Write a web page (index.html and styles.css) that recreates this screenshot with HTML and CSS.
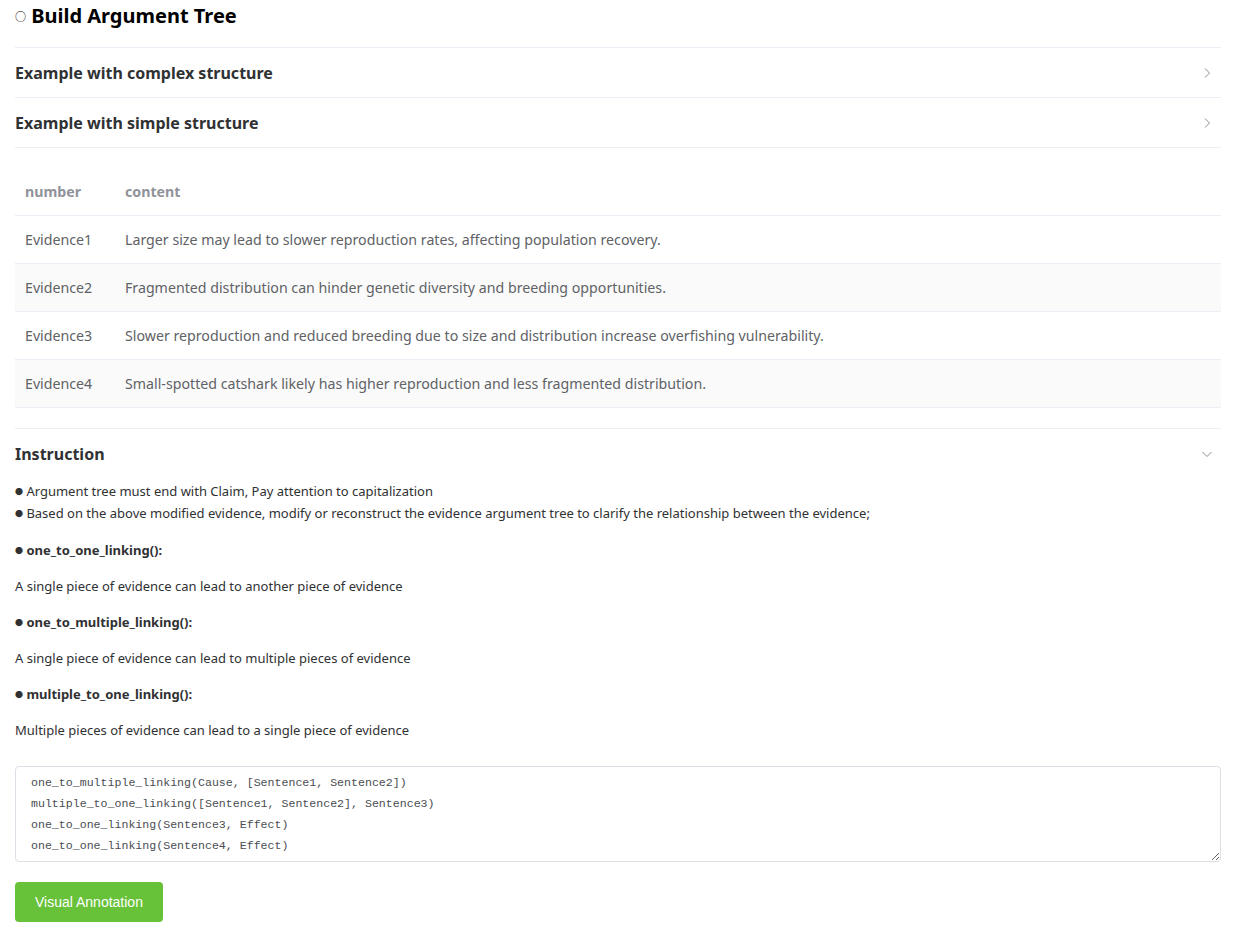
FILE: index.html
```html
<!DOCTYPE html>
<html lang="en">
<head>
    <meta charset="UTF-8">
    <meta name="viewport" content="width=device-width, initial-scale=1.0">
    <title>Build Argument Tree</title>
    <link rel="stylesheet" href="styles.css">
</head>
<body>
    <div class="page">
        <h3 class="title"><span class="ring">○</span> Build Argument Tree</h3>

        <div class="collapse">
            <div class="collapse_item">
                <div class="collapse_head">
                    <span>Example with complex structure</span>
                    <svg class="arrow" width="12" height="12" viewBox="0 0 12 12"><path d="M4 1.5 L8.5 6 L4 10.5" fill="none" stroke="#8a8f99" stroke-width="1"/></svg>
                </div>
            </div>
            <div class="collapse_item">
                <div class="collapse_head">
                    <span>Example with simple structure</span>
                    <svg class="arrow" width="12" height="12" viewBox="0 0 12 12"><path d="M4 1.5 L8.5 6 L4 10.5" fill="none" stroke="#8a8f99" stroke-width="1"/></svg>
                </div>
            </div>
        </div>

        <table class="ev_table">
            <thead>
                <tr>
                    <th>number</th>
                    <th>content</th>
                </tr>
            </thead>
            <tbody>
                <tr>
                    <td>Evidence1</td>
                    <td>Larger size may lead to slower reproduction rates, affecting population recovery.</td>
                </tr>
                <tr class="stripe">
                    <td>Evidence2</td>
                    <td>Fragmented distribution can hinder genetic diversity and breeding opportunities.</td>
                </tr>
                <tr>
                    <td>Evidence3</td>
                    <td>Slower reproduction and reduced breeding due to size and distribution increase overfishing vulnerability.</td>
                </tr>
                <tr class="stripe">
                    <td>Evidence4</td>
                    <td>Small-spotted catshark likely has higher reproduction and less fragmented distribution.</td>
                </tr>
            </tbody>
        </table>

        <div class="collapse">
            <div class="collapse_item open">
                <div class="collapse_head">
                    <span>Instruction</span>
                    <svg class="arrow" width="12" height="12" viewBox="0 0 12 12"><path d="M1.5 4 L6 8.5 L10.5 4" fill="none" stroke="#8a8f99" stroke-width="1"/></svg>
                </div>
                <div class="collapse_body">
                    <div class="rules">
                        <span class="dot">●</span> Argument tree must end with Claim, Pay attention to capitalization<br>
                        <span class="dot">●</span> Based on the above modified evidence, modify or reconstruct the evidence argument tree to clarify the relationship between the evidence;
                    </div>
                    <p><b><span class="dot">●</span> one_to_one_linking():</b></p>
                    <p>A single piece of evidence can lead to another piece of evidence</p>
                    <p><b><span class="dot">●</span> one_to_multiple_linking():</b></p>
                    <p>A single piece of evidence can lead to multiple pieces of evidence</p>
                    <p><b><span class="dot">●</span> multiple_to_one_linking():</b></p>
                    <p>Multiple pieces of evidence can lead to a single piece of evidence</p>
                </div>
            </div>
        </div>

        <textarea class="code_box" rows="4">one_to_multiple_linking(Cause, [Sentence1, Sentence2])
multiple_to_one_linking([Sentence1, Sentence2], Sentence3)
one_to_one_linking(Sentence3, Effect)
one_to_one_linking(Sentence4, Effect)</textarea>

        <button class="btn_success">Visual Annotation</button>
    </div>
</body>
</html>
```

FILE: styles.css
```css
body{
    margin:0;
    font-family:"Noto Sans","Noto Sans CJK SC",sans-serif;
    color:#303133;
    background:#fff;
}
.page{
    padding:0 15px 20px 15px;
}
.title{
    margin:0;
    height:32px;
    font-size:20px;
    line-height:32px;
    font-weight:bold;
    color:#000;
}
.ring{
    font-size:11px;
    line-height:0;
    font-weight:normal;
    vertical-align:2px;
}
.dot{
    font-size:8px;
    line-height:0;
    vertical-align:1px;
}
/* 折叠面板 */
.collapse{
    border-top:1px solid #EBEEF5;
    margin-top:15px;
}
.collapse_item{
    border-bottom:1px solid #EBEEF5;
}
.collapse_item.open{
    border-bottom:none;
}
.collapse_head{
    height:49px;
    display:flex;
    align-items:center;
    justify-content:space-between;
    font-size:16px;
    font-weight:bold;
    color:#303133;
}
.collapse_head .arrow{
    margin-right:8px;
}
.collapse_body{
    font-size:13px;
    color:#303133;
}
.rules{
    line-height:22px;
    margin:2px 0 15px 0;
}
.collapse_body p{
    margin:14px 0;
    line-height:22px;
}
/* 表格 */
.ev_table{
    width:100%;
    border-collapse:collapse;
    margin:20px 0;
    font-size:14.2px;
    color:#606266;
}
.ev_table th,.ev_table td{
    text-align:left;
    padding:0 10px;
    height:47px;
    border-bottom:1px solid #EBEEF5;
}
.ev_table th{
    color:#909399;
    font-weight:bold;
}
.ev_table th:first-child{width:80px}
.ev_table tr.stripe td{background:#FAFAFA}
/* 输入框 */
.code_box{
    display:block;
    box-sizing:border-box;
    width:100%;
    height:96px;
    margin-top:25px;
    padding:5px 15px;
    border:1px solid #DCDFE6;
    border-radius:4px;
    font-family:"Liberation Mono",monospace;
    font-size:11.6px;
    line-height:21px;
    color:#4a4d52;
    resize:vertical;
}
.btn_success{
    margin-top:20px;
    height:40px;
    padding:0 20px;
    border:none;
    border-radius:4px;
    background:#67C23A;
    color:#fff;
    font-family:"Liberation Sans",Arial,sans-serif;
    font-size:14px;
}
```
